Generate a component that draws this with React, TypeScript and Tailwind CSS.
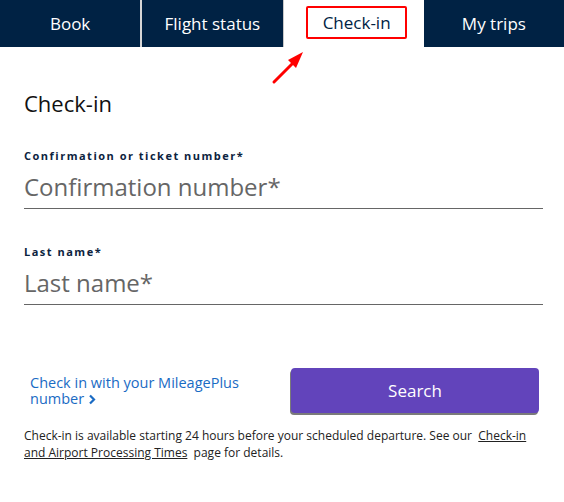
import React from "react";

const TABS = ["Book", "Flight status", "Check-in", "My trips"];

export default function App() {
  return (
    <div className="w-[564px] h-[502px] bg-white relative overflow-hidden" style={{ fontFamily: '"Open Sans", "Noto Sans", sans-serif' }}>
      {/* Tab bar */}
      <div className="flex h-[47px] bg-[#002244]">
        {TABS.map((t, i) => (
          <div
            key={t}
            className={
              i === 2
                ? "flex-1 flex items-center justify-center bg-white text-[#002244] text-[17px] border-l border-[#c8c8c8]"
                : i === 1
                ? "flex-1 flex items-center justify-center text-white text-[17px] border-l-2 border-[#d6d6d6]"
                : "flex-1 flex items-center justify-center text-white text-[17px]"
            }
          >
            {i === 2 ? (
              <span className="border-2 border-[#ff0000] rounded-[2px] w-[101px] h-[33px] flex items-center justify-center ml-[6px] mt-[-2px]">
                {t}
              </span>
            ) : (
              t
            )}
          </div>
        ))}
      </div>

      {/* annotation arrow */}
      <svg className="absolute left-[270px] top-[50px]" width="40" height="36" viewBox="0 0 40 36">
        <line x1="4" y1="32" x2="24" y2="12" stroke="#ff0000" strokeWidth="3" strokeLinecap="round" />
        <polygon points="33,2 18,10 26,18" fill="#ff0000" />
      </svg>

      <div className="px-6">
        <h2 className="mt-[42px] text-[22px] leading-[28px] text-[#111]">Check-in</h2>

        <div className="mt-[32px] mr-[-3px]">
          <div className="text-[11px] font-bold tracking-[1.5px] text-[#0c2340] leading-[14px]">Confirmation or ticket number*</div>
          <div className="mt-[8px] border-b border-[#666] pb-[5px] text-[24px] leading-[32px] text-[#666]">Confirmation number*</div>
        </div>

        <div className="mt-[36px] mr-[-3px]">
          <div className="text-[11px] font-bold tracking-[1.5px] text-[#0c2340] leading-[14px]">Last name*</div>
          <div className="mt-[8px] border-b border-[#666] pb-[5px] text-[24px] leading-[32px] text-[#666]">Last name*</div>
        </div>

        <div className="mt-[63px] flex items-center justify-between">
          <a className="ml-[6px] w-[230px] text-[14.5px] leading-[16px] text-[#1a6bc4]">
            Check in with your MileagePlus number{" "}
            <svg className="inline-block align-middle" width="8" height="11" viewBox="0 0 8 11">
              <path d="M2 1.5 L6 5.5 L2 9.5" fill="none" stroke="#1a6bc4" strokeWidth="2.2" />
            </svg>
          </a>
          <button className="w-[248px] h-[45px] mr-[1px] rounded-[4px] bg-[#6244bb] text-white text-[17px] shadow-[-1px_2px_0_#7a7a7a]">
            Search
          </button>
        </div>

        <p className="mt-[14px] text-[12px] leading-[17px] text-[#222]">
          Check-in is available starting 24 hours before your scheduled departure. See our&nbsp;{" "}
          <span className="underline">Check-in and Airport Processing Times</span>&nbsp;{" "}
          page for details.
        </p>
      </div>
    </div>
  );
}
